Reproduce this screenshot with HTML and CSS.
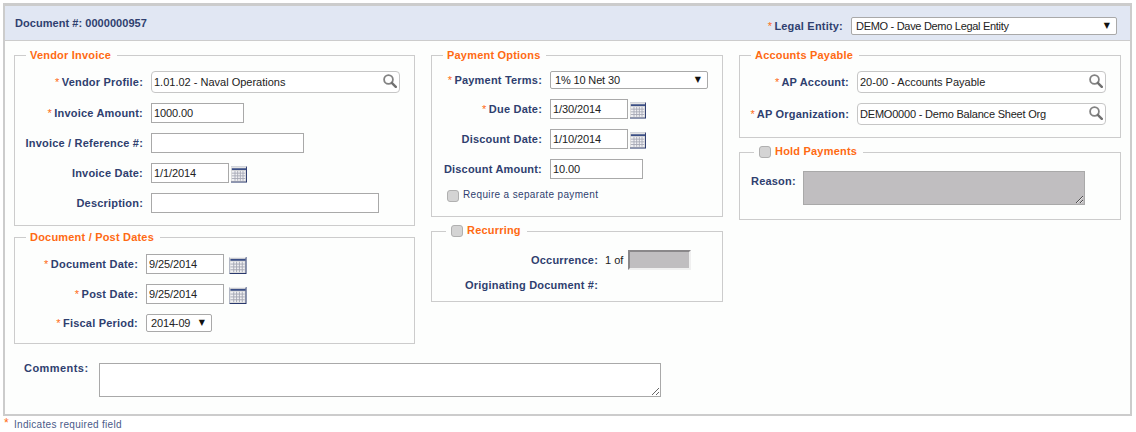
FILE: index.html
```html
<!DOCTYPE html>
<html lang="en">
<head>
<meta charset="utf-8">
<title>Document</title>
<link rel="stylesheet" href="styles.css">
</head>
<body>
<svg class="defs" width="0" height="0" aria-hidden="true">
  <symbol id="cal" viewBox="0 0 18 18">
    <rect x="0" y="0" width="18" height="18" fill="#1f2f66"/>
    <rect x="0" y="0" width="17" height="17" fill="#d9d9d9"/>
    <rect x="0" y="0" width="17" height="1" fill="#f2f2f2"/>
    <rect x="1" y="2" width="16" height="2" fill="#3b4f86"/>
    <rect x="1" y="5" width="15" height="11" fill="#f1f1f4"/>
    <path d="M4.500 5v11M7.500 5v11M10.500 5v11M13.500 5v11M1 7.500h15M1 10.500h15M1 13.500h15" stroke="#a6a8b4" stroke-width="1" fill="none"/>
  </symbol>
  <symbol id="mag" viewBox="0 0 14 14">
    <circle cx="5.500" cy="5.500" r="4.400" fill="none" stroke="#828282" stroke-width="1.800"/>
    <path d="M8.800 8.800L12.800 12.800" stroke="#707070" stroke-width="2.400" stroke-linecap="round"/>
  </symbol>
</svg>
<div class="panel">
  <header class="head">
    <div class="docno">Document #: 0000000957</div>
    <div class="row entity">
      <label class="lbl"><span class="req">*</span> Legal Entity:</label>
      <span class="sel w-entity"><select><option>DEMO - Dave Demo Legal Entity</option></select><i>▼</i></span>
    </div>
  </header>
  <div class="cols">
    <div class="col col-a">
      <fieldset class="box vendor">
        <legend>Vendor Invoice</legend>
        <div class="row">
          <label class="lbl"><span class="req">*</span> Vendor Profile:</label>
          <span class="lookup w-vendor"><input value="1.01.02 - Naval Operations"><svg class="mag"><use href="#mag"/></svg></span>
        </div>
        <div class="row">
          <label class="lbl"><span class="req">*</span> Invoice Amount:</label>
          <input class="txt w-amount" value="1000.00">
        </div>
        <div class="row">
          <label class="lbl">Invoice / Reference #:</label>
          <input class="txt w-ref">
        </div>
        <div class="row">
          <label class="lbl">Invoice Date:</label>
          <input class="txt w-date" value="1/1/2014"><svg class="cal"><use href="#cal"/></svg>
        </div>
        <div class="row">
          <label class="lbl">Description:</label>
          <input class="txt w-desc">
        </div>
      </fieldset>
      <fieldset class="box dates">
        <legend>Document / Post Dates</legend>
        <div class="row">
          <label class="lbl"><span class="req">*</span> Document Date:</label>
          <input class="txt w-date" value="9/25/2014"><svg class="cal wide"><use href="#cal"/></svg>
        </div>
        <div class="row">
          <label class="lbl"><span class="req">*</span> Post Date:</label>
          <input class="txt w-date" value="9/25/2014"><svg class="cal wide"><use href="#cal"/></svg>
        </div>
        <div class="row">
          <label class="lbl"><span class="req">*</span> Fiscal Period:</label>
          <span class="sel w-period"><select><option>2014-09</option></select><i>▼</i></span>
        </div>
      </fieldset>
    </div>
    <div class="col col-b">
      <fieldset class="box payment">
        <legend>Payment Options</legend>
        <div class="row">
          <label class="lbl"><span class="req">*</span> Payment Terms:</label>
          <span class="sel w-terms"><select><option>1% 10 Net 30</option></select><i>▼</i></span>
        </div>
        <div class="row">
          <label class="lbl"><span class="req">*</span> Due Date:</label>
          <input class="txt w-date" value="1/30/2014"><svg class="cal"><use href="#cal"/></svg>
        </div>
        <div class="row">
          <label class="lbl">Discount Date:</label>
          <input class="txt w-date" value="1/10/2014"><svg class="cal"><use href="#cal"/></svg>
        </div>
        <div class="row">
          <label class="lbl">Discount Amount:</label>
          <input class="txt w-amount" value="10.00">
        </div>
        <label class="check"><input type="checkbox" class="cb"><span>Require a separate payment</span></label>
      </fieldset>
      <fieldset class="box recurring">
        <legend class="leg-cb"><input type="checkbox" class="cb"><span>Recurring</span></legend>
        <div class="row occ">
          <label class="lbl">Occurrence:</label>
          <span class="of">1 of</span>
          <input class="inset" disabled>
        </div>
        <div class="row orig">
          <label class="lbl">Originating Document #:</label>
        </div>
      </fieldset>
    </div>
    <div class="col col-c">
      <fieldset class="box ap">
        <legend>Accounts Payable</legend>
        <div class="row">
          <label class="lbl"><span class="req">*</span> AP Account:</label>
          <span class="lookup w-ap"><input value="20-00 - Accounts Payable"><svg class="mag"><use href="#mag"/></svg></span>
        </div>
        <div class="row">
          <label class="lbl"><span class="req">*</span> AP Organization:</label>
          <span class="lookup w-ap tight"><input value="DEMO0000 - Demo Balance Sheet Org"><svg class="mag"><use href="#mag"/></svg></span>
        </div>
      </fieldset>
      <fieldset class="box hold">
        <legend class="leg-cb"><input type="checkbox" class="cb"><span>Hold Payments</span></legend>
        <div class="row top">
          <label class="lbl">Reason:</label>
          <textarea class="area reason" disabled></textarea>
        </div>
      </fieldset>
    </div>
  </div>
  <div class="row top comments">
    <label class="lbl">Comments:</label>
    <textarea class="area note"></textarea>
  </div>
</div>
<footer class="foot"><span class="req">*</span><span>Indicates required field</span></footer>
</body>
</html>
```
FILE: styles.css
```css
* { box-sizing: border-box; }
html, body { margin: 0; padding: 0; }
body {
  background: #fff;
  font-family: "Liberation Sans", Arial, sans-serif;
  font-size: 11px;
  color: #2f3f6f;
  padding: 3px 4px 0 3px;
}
.defs { position: absolute; }
.panel {
  height: 413px;
  border: 2px solid #cccccc;
  border-top-width: 3px;
  background: #fdfefd;
}
.head {
  height: 35px;
  background: #e1e7f3;
  border-bottom: 1px solid #cccccc;
  display: flex;
  justify-content: space-between;
  align-items: flex-start;
  padding: 10px 13px 0 10px;
}
.docno { font-weight: bold; line-height: 14px; letter-spacing: 0.05px; }
.entity { margin-top: 1px; }
.row { display: flex; align-items: center; margin-bottom: 10px; }
.row.top { align-items: flex-start; }
.entity.row, .row:last-child { margin-bottom: 0; }
.lbl {
  font-weight: bold;
  font-size: 11px;
  letter-spacing: 0.2px;
  text-align: right;
  flex: none;
  margin-right: 8px;
  white-space: nowrap;
}
.req { color: #ff6a13; font-weight: normal; margin-right: -1px; }
.cols {
  display: flex;
  gap: 16px;
  padding: 7px 0 0 9px;
}
.col { display: flex; flex-direction: column; }
.col-a { width: 401px; }
.col-b { width: 292px; }
.col-c { width: 382px; }
.box {
  margin: 0;
  min-width: 0;
  border: 1px solid #cccccc;
}
legend {
  color: #ff6a13;
  font-weight: bold;
  font-size: 11px;
  letter-spacing: 0.2px;
  line-height: 14px;
  height: 14px;
  padding: 0 6px 0 4px;
  margin-left: 11px;
}
.leg-cb { display: flex; align-items: center; gap: 4px; padding: 0 6px 0 5px; margin-left: 14px; }
.leg-cb span { margin-top: -2px; }
.vendor { padding: 9px 0 12px 0; }
.vendor .lbl { width: 128px; }
.dates { margin-top: 4px; padding: 10px 0 11px 0; }
.dates .lbl { width: 123px; }
.payment { padding: 9px 0 13px 0; }
.payment .lbl { width: 110px; }
.recurring { margin-top: 7px; padding: 12px 0 9px 0; }
.recurring .lbl { width: 166px; margin-right: 7px; }
.ap { padding: 9px 0 12px 0; }
.ap .lbl { width: 109px; }
.hold { margin-top: 7px; padding: 12px 0 14px 0; }
.hold .row { padding-left: 11px; }
.hold .lbl { width: 44px; text-align: left; margin-top: 4px; }
.txt {
  height: 20px;
  border: 1px solid #a9a9a9;
  background: #fff;
  color: #222;
  font: 11px "Liberation Sans", Arial, sans-serif;
  letter-spacing: -0.1px;
  padding: 0 2px;
  outline: none;
}
.w-amount { width: 93px; }
.w-ref { width: 153px; }
.w-date { width: 78px; }
.w-desc { width: 228px; }
.cal { width: 16px; height: 17px; margin: 2px 0 0 2px; flex: none; }
.cal.wide { width: 18px; margin-left: 5px; }
.lookup {
  display: flex;
  align-items: center;
  height: 22px;
  border: 1px solid #c6c6c6;
  border-radius: 4px;
  background: #fff;
  padding: 0 2px 0 2px;
}
.lookup input {
  flex: 1;
  min-width: 0;
  border: 0;
  padding: 0;
  outline: none;
  background: transparent;
  color: #222;
  font: 11px "Liberation Sans", Arial, sans-serif;
  letter-spacing: 0;
}
.lookup.tight input { letter-spacing: -0.2px; }
.mag { width: 14px; height: 14px; flex: none; margin-top: -2px; }
.w-vendor { width: 249px; }
.w-ap { width: 249px; }
.sel { position: relative; display: block; height: 18px; }
.sel select {
  appearance: none;
  -webkit-appearance: none;
  display: block;
  width: 100%;
  height: 100%;
  border: 1px solid #a9a9a9;
  border-radius: 2px;
  background: #fff;
  color: #222;
  font: 11px "Liberation Sans", Arial, sans-serif;
  letter-spacing: -0.15px;
  padding: 0 0 0 4px;
  outline: none;
}
.sel.w-entity select { letter-spacing: -0.3px; }
.sel i {
  position: absolute;
  right: 7px;
  top: 3px;
  font: normal 8px/12px "DejaVu Sans", sans-serif;
  color: #111;
}
.w-entity { width: 266px; }
.w-period { width: 66px; }
.w-terms { width: 158px; }
.check { display: flex; align-items: flex-start; gap: 4px; margin: 10px 0 0 15px; padding-bottom: 1px; font-size: 10px; letter-spacing: 0.35px; line-height: 12px; }
.cb {
  appearance: none;
  -webkit-appearance: none;
  width: 12px;
  height: 12px;
  margin: 0;
  flex: none;
  border: 1px solid #b0b0b0;
  border-radius: 3px;
  background: #d4d4d4;
}
.check .cb { margin-top: 1px; }
.occ { margin-bottom: 8px; }
.of { color: #222; margin-right: 5px; white-space: nowrap; }
.inset {
  width: 63px;
  height: 20px;
  border: 2px solid;
  border-color: #8a888a #f0f0f0 #f0f0f0 #8a888a;
  background: #c0bec0;
  padding: 0;
}
.orig { height: 14px; }
.area {
  display: block;
  border: 1px solid #a9a9a9;
  background: #fff;
  padding: 2px;
  outline: none;
  font: 11px "Liberation Sans", Arial, sans-serif;
}
.reason { width: 282px; height: 34px; background: #c0bec0; }
.comments { margin: 19px 0 0 19px; }
.comments .lbl { width: 65px; margin-right: 10px; text-align: left; margin-top: -1px; letter-spacing: 0.45px; }
.note { width: 562px; height: 34px; }
.foot {
  display: flex;
  gap: 5px;
  padding: 3px 0 0 1px;
  font-size: 10px;
  letter-spacing: 0.3px;
  line-height: 12px;
  color: #4a5a88;
}
.foot .req { font-size: 12px; margin: -2px 0 0 0; }
```
